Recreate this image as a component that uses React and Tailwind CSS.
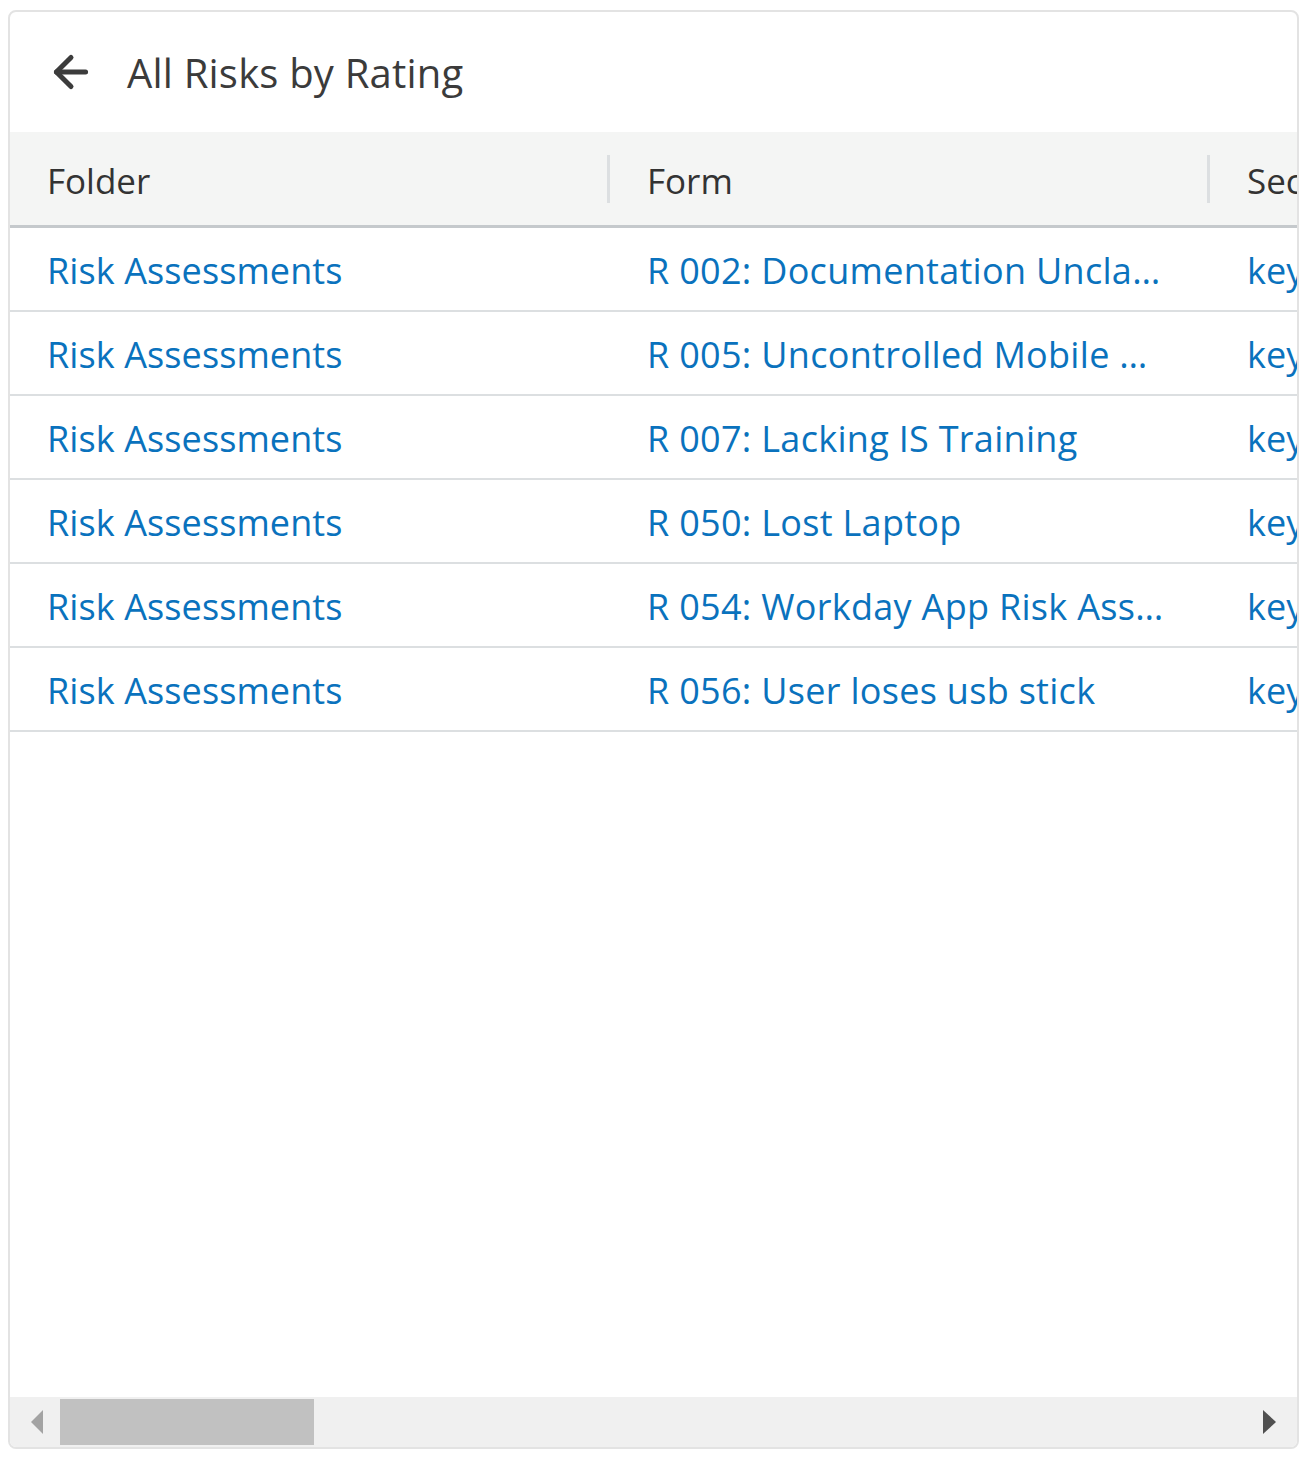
import { ArrowLeft } from 'lucide-react';

const rows = [
  'R 002: Documentation Uncla…',
  'R 005: Uncontrolled Mobile …',
  'R 007: Lacking IS Training',
  'R 050: Lost Laptop',
  'R 054: Workday App Risk Ass…',
  'R 056: User loses usb stick',
];

export default function App() {
  return (
    <div className="bg-white w-[1315px] h-[1459px] pt-[10px] pl-[8px] font-['Open_Sans',sans-serif]">
      <div className="w-[1291px] h-[1439px] border-2 border-[#e3e3e3] rounded-[8px] overflow-hidden flex flex-col">
        <div className="h-[120px] flex items-center pl-[36px] shrink-0">
          <ArrowLeft className="w-[50px] h-[50px] text-[#3c3c3c]" strokeWidth={2.4} />
          <h1 className="ml-[31px] text-[40px] text-[#3b3b3b] tracking-[0.2px] mt-[2px]">All Risks by Rating</h1>
        </div>
        <div className="flex-1 overflow-hidden">
          <div className="w-[1900px]">
            <div className="h-[96px] bg-[#f4f5f4] border-b-[3px] border-[#c5c9cc] flex items-center text-[35px] text-[#333]">
              <div className="w-[600px] h-[48px] flex items-center pl-[37px] border-r-[3px] border-[#dcdfe1] pt-[6px]">Folder</div>
              <div className="w-[600px] h-[48px] flex items-center pl-[37px] border-r-[3px] border-[#dcdfe1] pt-[6px]">Form</div>
              <div className="w-[600px] h-[48px] flex items-center pl-[37px] pt-[6px]">Section</div>
            </div>
            {rows.map((r, i) => (
              <div key={i} className="h-[84px] border-b-2 border-[#dcdfe1] flex items-center text-[36px] text-[#0a72bd] whitespace-nowrap pt-[4px]">
                <div className="w-[600px] pl-[37px] tracking-[0.1px]">Risk Assessments</div>
                <div className="w-[600px] pl-[37px] overflow-hidden tracking-[0.3px]">{r}</div>
                <div className="w-[600px] pl-[37px]">key risks</div>
              </div>
            ))}
          </div>
        </div>
        <div className="h-[50px] bg-[#f0f0f0] flex items-center shrink-0">
          <div className="w-[50px] flex justify-center">
            <div className="w-0 h-0 border-y-[12px] border-y-transparent border-r-[12px] border-r-[#a3a3a3] ml-[4px]"></div>
          </div>
          <div className="w-[254px] h-[46px] bg-[#c1c1c1]"></div>
          <div className="flex-1"></div>
          <div className="w-[50px] flex justify-center">
            <div className="w-0 h-0 border-y-[12px] border-y-transparent border-l-[13px] border-l-[#505050] mr-[6px]"></div>
          </div>
        </div>
      </div>
    </div>
  );
}
